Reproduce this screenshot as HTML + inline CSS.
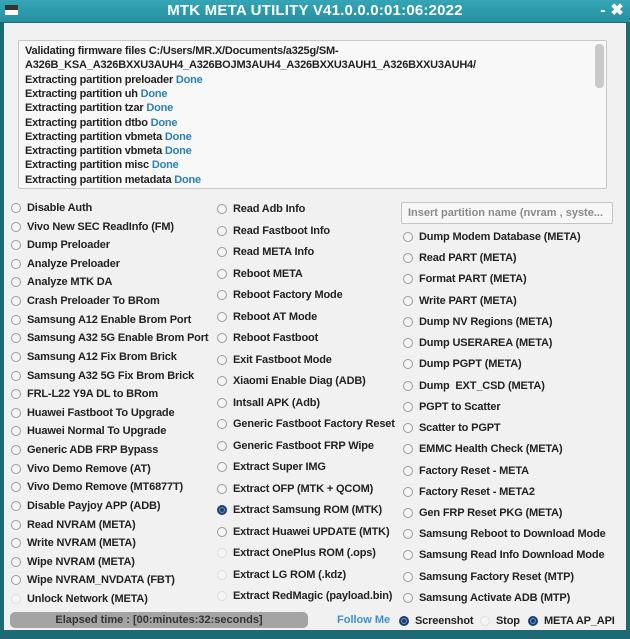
<!DOCTYPE html><html><head><style>
*{margin:0;padding:0;box-sizing:border-box}
body{width:630px;height:639px;background:#1d6a75;font-family:"Liberation Sans",sans-serif;font-weight:bold;font-size:11px;color:#222;position:relative;overflow:hidden}
.tb{position:absolute;left:0;top:0;width:630px;height:22px;background:linear-gradient(#35a6b6,#2690a0);color:#fff;font-size:15px;text-align:center;line-height:22px;letter-spacing:0.2px}
.main{position:absolute;left:4px;top:23px;width:622px;height:607px;background:#f1f1f1}
.log{position:absolute;left:18px;top:40px;width:589px;height:149px;background:#f8f8f8;border:1px solid #c8c8c8;border-radius:2px;overflow:hidden}
.log .l{position:absolute;left:6px;white-space:nowrap;letter-spacing:-0.2px}
.d{color:#2a7fb8}
.sb{position:absolute;left:576px;top:3px;width:9px;height:44px;background:#c9c9c9;border-radius:4px}
.r{position:absolute;white-space:nowrap;letter-spacing:-0.15px}
.r:before{content:"";position:absolute;left:-16px;top:1px;width:10px;height:10px;border:1px solid #9a9a9a;border-radius:50%;background:#f5f5f5;box-sizing:border-box}
.r.on:before{background:#1d3f6e;border:2px solid #1d3f6e;box-shadow:inset 0 0 0 1px #6f9fd8}
.r.dim:before{border-color:#ddd}
.fm{position:absolute;white-space:nowrap;color:#3a8fd0}
.inp{position:absolute;left:401px;top:202px;width:212px;height:22px;border:1px solid #c5c5c5;background:#f7f7f7;color:#8a8a8a;font-size:11px;padding:4px 6px;border-radius:2px}
.pb{position:absolute;left:10px;top:612px;width:298px;height:16px;background:#a4a4a4;border-radius:5px;text-align:center;line-height:16px;color:#333}
</style></head><body>
<div class="tb">MTK META UTILITY V41.0.0.0:01:06:2022<span style="position:absolute;right:6px;top:0;font-size:16px">- ✖</span></div>
<div style="position:absolute;left:5px;top:5px;width:13px;height:10px;background:#fff;border-top:5px solid #333"></div>
<div class="main"></div>
<div class="log">
<div class="l" style="top:4px">Validating firmware files C:/Users/MR.X/Documents/a325g/SM-</div>
<div class="l" style="top:18.3px">A326B_KSA_A326BXXU3AUH4_A326BOJM3AUH4_A326BXXU3AUH1_A326BXXU3AUH4/</div>
<div class="l" style="top:32.6px">Extracting partition preloader <span class="d">Done</span></div>
<div class="l" style="top:46.9px">Extracting partition uh <span class="d">Done</span></div>
<div class="l" style="top:61.2px">Extracting partition tzar <span class="d">Done</span></div>
<div class="l" style="top:75.5px">Extracting partition dtbo <span class="d">Done</span></div>
<div class="l" style="top:89.8px">Extracting partition vbmeta <span class="d">Done</span></div>
<div class="l" style="top:104.1px">Extracting partition vbmeta <span class="d">Done</span></div>
<div class="l" style="top:118.4px">Extracting partition misc <span class="d">Done</span></div>
<div class="l" style="top:132.7px">Extracting partition metadata <span class="d">Done</span></div>
<div class="sb"></div>
</div>
<div class="inp">Insert partition name (nvram , syste...</div>
<div id="c"></div>
<div class="pb">Elapsed time : [00:minutes:32:seconds]</div>
<div class="fm" style="left:337px;top:614px">Follow Me</div>
<div class="r on" style="left:415px;top:615px">Screenshot</div>
<div class="r dim" style="left:496px;top:615px">Stop</div>
<div class="r on" style="left:544px;top:615px">META AP_API</div>
<script>
var c1=["Disable Auth","Vivo New SEC ReadInfo (FM)","Dump Preloader","Analyze Preloader","Analyze MTK DA","Crash Preloader To BRom","Samsung A12 Enable Brom Port","Samsung A32 5G Enable Brom Port","Samsung A12 Fix Brom Brick","Samsung A32 5G Fix Brom Brick","FRL-L22 Y9A DL to BRom","Huawei Fastboot To Upgrade","Huawei Normal To Upgrade","Generic ADB FRP Bypass","Vivo Demo Remove (AT)","Vivo Demo Remove (MT6877T)","Disable Payjoy APP (ADB)","Read NVRAM (META)","Write NVRAM (META)","Wipe NVRAM (META)","Wipe NVRAM_NVDATA (FBT)","Unlock Network (META)"];
var c2=["Read Adb Info","Read Fastboot Info","Read META Info","Reboot META","Reboot Factory Mode","Reboot AT Mode","Reboot Fastboot","Exit Fastboot Mode","Xiaomi Enable Diag (ADB)","Intsall APK (Adb)","Generic Fastboot Factory Reset","Generic Fastboot FRP Wipe","Extract Super IMG","Extract OFP (MTK + QCOM)","Extract Samsung ROM (MTK)","Extract Huawei UPDATE (MTK)","Extract OnePlus ROM (.ops)","Extract LG ROM (.kdz)","Extract RedMagic (payload.bin)"];
var c3=["Dump Modem Database (META)","Read PART (META)","Format PART (META)","Write PART (META)","Dump NV Regions (META)","Dump USERAREA (META)","Dump PGPT (META)","Dump&nbsp; EXT_CSD (META)","PGPT to Scatter","Scatter to PGPT","EMMC Health Check (META)","Factory Reset - META","Factory Reset - META2","Gen FRP Reset PKG (META)","Samsung Reboot to Download Mode","Samsung Read Info Download Mode","Samsung Factory Reset (MTP)","Samsung Activate ADB (MTP)"];
var h="";
c1.forEach(function(t,i){h+='<div class="r'+(i==21?' dim':'')+'" style="left:27px;top:'+(202+i*18.62)+'px">'+t+'</div>'});
c2.forEach(function(t,i){h+='<div class="r'+(i==14?' on':'')+(i>=16?' dim':'')+'" style="left:233px;top:'+(203+i*21.5)+'px">'+t+'</div>'});
c3.forEach(function(t,i){h+='<div class="r" style="left:419px;top:'+(231+i*21.23)+'px">'+t+'</div>'});
document.getElementById("c").innerHTML=h;
</script>
</body></html>
